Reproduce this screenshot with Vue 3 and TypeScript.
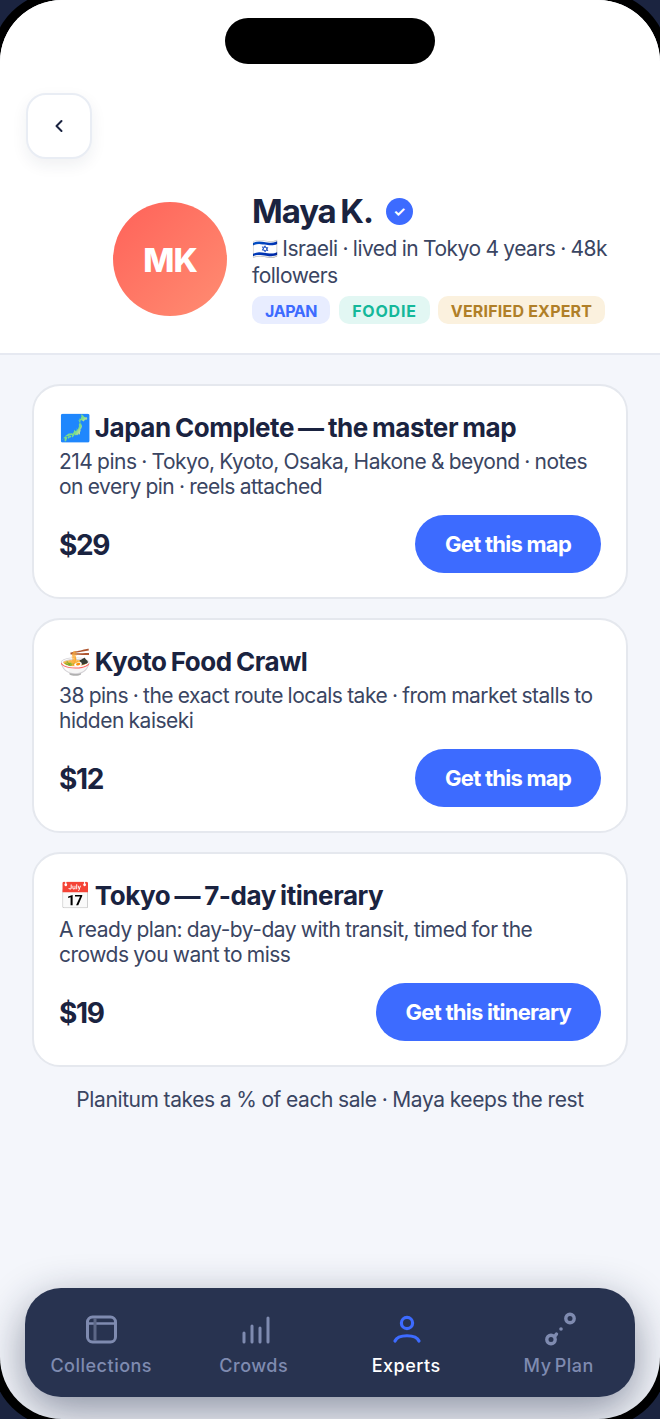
<script setup lang="ts">
interface MapItem {
  emoji: string
  title: string
  desc: string
  price: string
  cta: string
}

const tags = [
  { label: 'JAPAN', cls: 'tag-blue' },
  { label: 'FOODIE', cls: 'tag-green' },
  { label: 'VERIFIED EXPERT', cls: 'tag-gold' },
]

const items: MapItem[] = [
  {
    emoji: '🗾',
    title: 'Japan Complete — the master map',
    desc: '214 pins · Tokyo, Kyoto, Osaka, Hakone & beyond · notes on every pin · reels attached',
    price: '$29',
    cta: 'Get this map',
  },
  {
    emoji: '🍜',
    title: 'Kyoto Food Crawl',
    desc: '38 pins · the exact route locals take · from market stalls to hidden kaiseki',
    price: '$12',
    cta: 'Get this map',
  },
  {
    emoji: '📅',
    title: 'Tokyo — 7-day itinerary',
    desc: 'A ready plan: day-by-day with transit, timed for the crowds you want to miss',
    price: '$19',
    cta: 'Get this itinerary',
  },
]
</script>

<template>
  <div class="phone">
    <div class="screen">
      <div class="island"></div>

      <header class="header">
        <button class="back" aria-label="Back">
          <svg width="12" height="16" viewBox="0 0 12 16" fill="none">
            <path d="M8.5 3 L3.5 8 L8.5 13" stroke="#1a2340" stroke-width="2" stroke-linecap="round" stroke-linejoin="round" />
          </svg>
        </button>
        <div class="profile">
          <div class="avatar">MK</div>
          <div class="info">
            <div class="name-row">
              <h1 class="name">Maya K.</h1>
              <span class="verified">✓</span>
            </div>
            <p class="bio">🇮🇱 Israeli · lived in Tokyo 4 years · 48k followers</p>
            <div class="tags">
              <span v-for="t in tags" :key="t.label" class="tag" :class="t.cls">{{ t.label }}</span>
            </div>
          </div>
        </div>
      </header>

      <main class="body">
        <section v-for="item in items" :key="item.title" class="card">
          <h2 class="card-title">{{ item.emoji }} {{ item.title }}</h2>
          <p class="card-desc">{{ item.desc }}</p>
          <div class="card-foot">
            <span class="price">{{ item.price }}</span>
            <button class="cta">{{ item.cta }}</button>
          </div>
        </section>
        <p class="note">Planitum takes a % of each sale · Maya keeps the rest</p>
      </main>

      <nav class="nav">
        <div class="nav-item">
          <svg class="nav-icon" width="36" height="36" viewBox="0 0 36 36" fill="none" stroke="#7f8bb0" stroke-width="3">
            <rect x="4.5" y="5" width="28" height="25" rx="5" />
            <path d="M4.5 11.5 H32.5" stroke-width="2.5" />
            <path d="M12 6 V29" stroke="#5c6786" stroke-width="3" />
          </svg>
          <span>Collections</span>
        </div>
        <div class="nav-item">
          <svg class="nav-icon" width="36" height="36" viewBox="0 0 36 36" fill="none" stroke="#7f8bb0" stroke-width="3" stroke-linecap="round">
            <path d="M8 30 V21" />
            <path d="M16 30 V14" />
            <path d="M24 30 V16" />
            <path d="M32 30 V6" />
          </svg>
          <span>Crowds</span>
        </div>
        <div class="nav-item active">
          <svg class="nav-icon" width="36" height="36" viewBox="0 0 36 36" fill="none" stroke="#3d6bff" stroke-width="3.2" stroke-linecap="round">
            <circle cx="19" cy="11" r="5.6" />
            <path d="M7 29 C10 22 28 22 31 29" />
          </svg>
          <span>Experts</span>
        </div>
        <div class="nav-item">
          <svg class="nav-icon" width="36" height="36" viewBox="0 0 36 36" fill="none" stroke="#7f8bb0" stroke-width="3.4">
            <circle cx="29" cy="6.5" r="4.2" />
            <circle cx="10" cy="27.5" r="4.2" />
            <path d="M14 24 L15.5 22" stroke-linecap="round" />
            <circle cx="20" cy="17" r="1.8" fill="#7f8bb0" stroke="none" />
          </svg>
          <span>My Plan</span>
        </div>
      </nav>
    </div>
  </div>
</template>

<style>
html,
body {
  margin: 0;
  background: #1b2440;
}
</style>

<style scoped>
.phone {
  width: 660px;
  height: 1419px;
  background: #1b2440;
  overflow: hidden;
  font-family: Inter, "Noto Sans", sans-serif;
}

.screen {
  position: relative;
  width: 660px;
  height: 1419px;
  display: flex;
  flex-direction: column;
  border-radius: 62px;
  overflow: hidden;
  background: #f4f6fb;
  box-shadow: 0 0 0 9px #000;
}

.island {
  position: absolute;
  top: 18px;
  left: 225px;
  width: 210px;
  height: 46px;
  border-radius: 23px;
  background: #000;
}

.header {
  background: #fff;
  border-bottom: 2px solid #e6e9f1;
  padding: 93px 46px 0 26px;
  height: 355px;
  box-sizing: border-box;
  flex-shrink: 0;
}

.back {
  width: 66px;
  height: 66px;
  display: flex;
  align-items: center;
  justify-content: center;
  padding: 0;
  background: #fff;
  border: 2px solid #e9edf4;
  border-radius: 20px;
  box-shadow: 0 6px 16px rgba(30, 40, 70, 0.07);
}

.profile {
  display: flex;
  align-items: center;
  gap: 25px;
  margin: 33px 0 0 87px;
}

.avatar {
  width: 114px;
  height: 114px;
  margin-top: 2px;
  flex-shrink: 0;
  border-radius: 50%;
  display: flex;
  align-items: center;
  justify-content: center;
  background: linear-gradient(135deg, #ff6259, #ff8d72);
  color: #fff;
  font-size: 33px;
  font-weight: 800;
  letter-spacing: -1px;
  padding-top: 2px;
  box-sizing: border-box;
}

.info {
  min-width: 0;
}

.name-row {
  display: flex;
  align-items: center;
  gap: 13px;
}

.name {
  margin: 0;
  font-size: 33px;
  line-height: 38px;
  font-weight: 700;
  letter-spacing: -1.1px;
  word-spacing: -2px;
  color: #1a2340;
}

.verified {
  width: 27px;
  height: 27px;
  border-radius: 50%;
  background: #3d6bff;
  color: #fff;
  font-size: 14px;
  font-weight: 700;
  display: flex;
  align-items: center;
  justify-content: center;
}

.bio {
  margin: 5px 0 7px;
  font-size: 21px;
  line-height: 27px;
  letter-spacing: -0.5px;
  word-spacing: -0.6px;
  color: #3a4562;
}

.tags {
  display: flex;
  gap: 9px;
}

.tag {
  height: 28px;
  padding: 0 13px;
  border-radius: 10px;
  font-size: 16px;
  font-weight: 700;
  line-height: 30px;
  letter-spacing: 0.2px;
}

.tag-blue {
  background: #e8edff;
  color: #3d6bff;
  letter-spacing: -0.4px;
}

.tag-green {
  background: #e2f7f3;
  color: #14b89a;
  letter-spacing: 0.8px;
  margin-right: -1px;
}

.tag-gold {
  background: #fbf1de;
  color: #b07f28;
}

.body {
  flex: 1;
  padding: 29px 32px 0;
  display: flex;
  flex-direction: column;
  gap: 19px;
}

.card {
  height: 215px;
  box-sizing: border-box;
  padding: 25px 25px 0;
  background: #fff;
  border: 2px solid #e5e8ee;
  border-radius: 28px;
}

.card-title {
  margin: 0;
  font-size: 26px;
  line-height: 34px;
  font-weight: 700;
  letter-spacing: -0.45px;
  word-spacing: -1.5px;
  color: #1a2340;
}

.card-desc {
  margin: 4px 0 0;
  font-size: 21px;
  line-height: 25px;
  letter-spacing: -0.5px;
  word-spacing: -0.7px;
  color: #3a4562;
}

.card-foot {
  display: flex;
  align-items: center;
  justify-content: space-between;
  margin-top: 16px;
}

.price {
  padding-top: 2px;
  font-size: 28px;
  font-weight: 700;
  letter-spacing: -1.3px;
  color: #1a2340;
}

.cta {
  height: 58px;
  padding: 0 30px;
  border: 0;
  border-radius: 29px;
  background: #3d6bff;
  color: #fff;
  font-family: inherit;
  font-size: 22px;
  font-weight: 700;
  letter-spacing: -0.75px;
}

.note {
  margin: 1px 0 0;
  text-align: center;
  font-size: 21px;
  line-height: 26px;
  letter-spacing: -0.4px;
  word-spacing: -0.5px;
  color: #3a4562;
}

.nav {
  flex-shrink: 0;
  height: 109px;
  margin: 0 25px 22px;
  display: grid;
  grid-template-columns: repeat(4, 1fr);
  background: #283350;
  border-radius: 36px;
  box-shadow: 0 14px 44px rgba(26, 35, 64, 0.48);
}

.nav-item {
  display: flex;
  flex-direction: column;
  align-items: center;
  padding-top: 24px;
  font-size: 18px;
  line-height: 22px;
  font-weight: 500;
  letter-spacing: 0.5px;
  word-spacing: -2px;
  color: #7f8bb0;
}

.nav-icon {
  display: block;
  margin-bottom: 7px;
}

.active {
  color: #fff;
}
</style>
